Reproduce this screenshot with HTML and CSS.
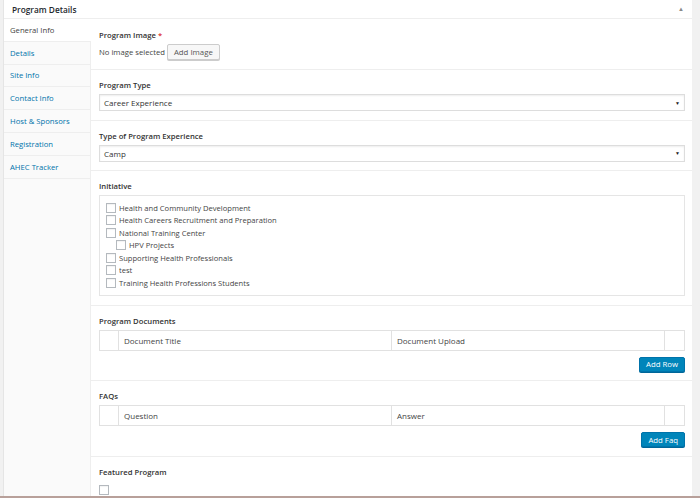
FILE: index.html
```html
<!DOCTYPE html>
<html>
<head>
<meta charset="utf-8">
<link rel="stylesheet" href="styles.css">
</head>
<body>
<div class="postbox">
  <div class="hndle">
    <span class="title">Program Details</span>
    <span class="toggle">&#9650;</span>
  </div>
  <div class="inside">
    <ul class="tabs">
      <li class="tab active">General Info</li>
      <li class="tab"><a>Details</a></li>
      <li class="tab"><a>Site Info</a></li>
      <li class="tab"><a>Contact Info</a></li>
      <li class="tab"><a>Host &amp; Sponsors</a></li>
      <li class="tab"><a>Registration</a></li>
      <li class="tab"><a>AHEC Tracker</a></li>
    </ul>
    <div class="fields">
      <div class="field first">
        <div class="label">Program Image <span class="req">*</span></div>
        <div class="image-row">
          <span class="noimg">No image selected</span>
          <span class="btn">Add Image</span>
        </div>
      </div>
      <div class="field">
        <div class="label">Program Type</div>
        <div class="select"><span>Career Experience</span><span class="arrow">&#9660;</span></div>
      </div>
      <div class="field">
        <div class="label">Type of Program Experience</div>
        <div class="select"><span>Camp</span><span class="arrow">&#9660;</span></div>
      </div>
      <div class="field">
        <div class="label">Initiative</div>
        <div class="checklist">
          <div class="item"><span class="cb"></span>Health and Community Development</div>
          <div class="item"><span class="cb"></span>Health Careers Recruitment and Preparation</div>
          <div class="item"><span class="cb"></span>National Training Center</div>
          <div class="item child"><span class="cb"></span>HPV Projects</div>
          <div class="item"><span class="cb"></span>Supporting Health Professionals</div>
          <div class="item"><span class="cb"></span>test</div>
          <div class="item"><span class="cb"></span>Training Health Professions Students</div>
        </div>
      </div>
      <div class="field">
        <div class="label">Program Documents</div>
        <div class="repeater">
          <div class="c-order"></div>
          <div class="c-col">Document Title</div>
          <div class="c-col">Document Upload</div>
          <div class="c-rem"></div>
        </div>
        <div class="actions"><span class="btn-primary">Add Row</span></div>
      </div>
      <div class="field">
        <div class="label">FAQs</div>
        <div class="repeater">
          <div class="c-order"></div>
          <div class="c-col">Question</div>
          <div class="c-col">Answer</div>
          <div class="c-rem"></div>
        </div>
        <div class="actions"><span class="btn-primary">Add Faq</span></div>
      </div>
      <div class="field last">
        <div class="label">Featured Program</div>
        <span class="cb big"></span>
      </div>
    </div>
  </div>
</div>
<div class="taskbar"></div>
</body>
</html>
```

FILE: styles.css
```css
* { box-sizing: border-box; }
html, body { margin: 0; padding: 0; }
body {
  background: #f1f1f1;
  font-family: "Open Sans", "Liberation Sans", sans-serif;
  color: #444;
  width: 700px;
  height: 498px;
  overflow: hidden;
  position: relative;
}
.postbox {
  margin-left: 3px;
  width: 689px;
  height: 496px;
  background: #fff;
  border-left: 1px solid #e5e5e5;
  overflow: hidden;
}
.hndle {
  height: 19px;
  border-bottom: 1px solid #eee;
  display: flex;
  align-items: center;
  justify-content: space-between;
  padding: 0 8px 0 8px;
}
.title {
  font-size: 8.3px;
  font-weight: 600;
  color: #23282d;
}
.toggle {
  font-size: 6px;
  color: #888;
}
.inside {
  display: flex;
  height: 477px;
}
.tabs {
  list-style: none;
  margin: 0;
  padding: 0;
  width: 87px;
  flex: none;
  background: #fafafa;
  border-right: 1px solid #eee;
}
.tab {
  height: 22.8px;
  border-bottom: 1px solid #eee;
  display: flex;
  align-items: center;
  padding-left: 6px;
  font-size: 7.7px;
  color: #0073aa;
}
.tab a { color: #0073aa; }
.tab.active {
  background: #fff;
  color: #444;
  margin-right: -1px;
}
.fields {
  flex: 1;
  min-width: 0;
}
.field {
  padding: 9px 7px 8.5px 8px;
  border-bottom: 1px solid #eee;
}
.field.first { padding-top: 10px; padding-bottom: 9px; }
.field.last { border-bottom: none; }
.label {
  font-size: 7.7px;
  font-weight: 600;
  color: #333;
  line-height: 12px;
  margin-bottom: 3px;
}
.req { color: #dc3232; }
.image-row {
  display: flex;
  align-items: center;
  gap: 2px;
  font-size: 7.7px;
  color: #444;
  margin-top: 1px;
}
.btn {
  display: inline-flex;
  align-items: center;
  height: 16px;
  padding: 0 6px;
  border: 1px solid #ccc;
  background: #f7f7f7;
  box-shadow: 0 1px 0 #ccc;
  border-radius: 2px;
  color: #555;
  font-size: 7.8px;
}
.select {
  height: 17px;
  border: 1px solid #ddd;
  box-shadow: inset 0 1px 2px rgba(0,0,0,0.07);
  display: flex;
  align-items: center;
  justify-content: space-between;
  padding: 0 4px 0 4px;
  font-size: 8px;
  color: #333;
}
.arrow { font-size: 5px; color: #222; }
.checklist {
  border: 1px solid #e5e5e5;
  height: 101px;
  padding: 5.5px 6px;
}
.item {
  display: flex;
  align-items: center;
  height: 12.5px;
  font-size: 7.6px;
  color: #444;
}
.item.child { padding-left: 10px; }
.cb {
  width: 10px;
  height: 10px;
  border: 1px solid #b4b9be;
  background: #fff;
  margin-right: 3px;
  flex: none;
  box-shadow: inset 0 1px 1px rgba(0,0,0,0.05);
}
.cb.big {
  display: block;
  margin-top: 7px;
}
.repeater {
  display: flex;
  height: 21px;
  border: 1px solid #e1e1e1;
  margin-top: 0.5px;
}
.c-order { width: 19px; border-right: 1px solid #e1e1e1; }
.c-col {
  flex: 1;
  display: flex;
  align-items: center;
  padding-left: 5px;
  font-size: 8px;
  color: #444;
}
.c-col + .c-col { border-left: 1px solid #e1e1e1; }
.c-rem { width: 20px; border-left: 1px solid #e1e1e1; }
.actions {
  display: flex;
  justify-content: flex-end;
  margin-top: 6px;
}
.btn-primary {
  display: inline-flex;
  align-items: center;
  height: 15px;
  padding: 0 6px;
  background: #0085ba;
  border: 1px solid #0073aa;
  box-shadow: 0 1px 0 #006799;
  border-radius: 2px;
  color: #fff;
  font-size: 7.8px;
}
.taskbar {
  position: absolute;
  left: 0;
  bottom: 0;
  width: 700px;
  height: 2px;
  background: #b8a09a;
}
```
